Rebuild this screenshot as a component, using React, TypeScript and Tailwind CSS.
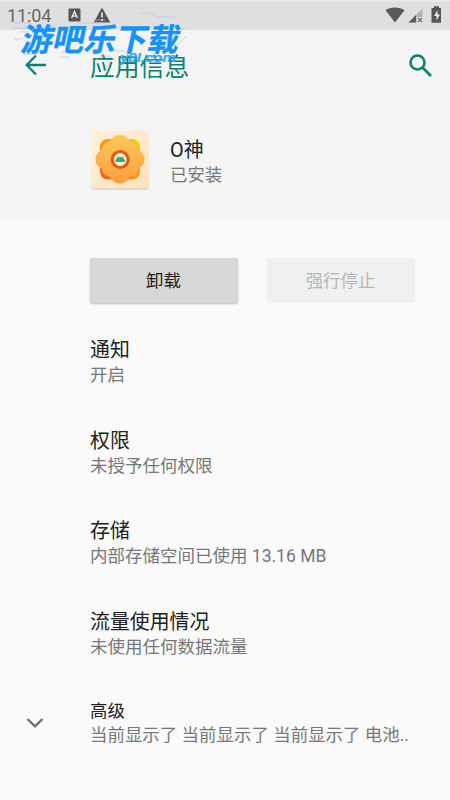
const rows = [
  { title: '通知', sub: '开启' },
  { title: '权限', sub: '未授予任何权限' },
  { title: '存储', sub: '内部存储空间已使用 13.16 MB' },
  { title: '流量使用情况', sub: '未使用任何数据流量' },
];

function StatusBar() {
  return (
    <div className="flex h-[30px] items-start justify-between border-t-2 border-[#e9e9e9] bg-[#dfdfdf] text-[#5a5a5a]">
      <div className="flex items-start pl-[7px] pt-[3px]">
        <span className="w-[61px] text-[18px] leading-[22px] tracking-[-0.1px] text-[#666]">11:04</span>
        <svg className="mt-[3px]" width="13" height="14" viewBox="0 0 13 14">
          <rect x="0.5" y="0.5" width="12" height="13" rx="1.2" fill="#555" />
          <path d="M3.6 10 6.5 3.5 9.4 10M4.6 8h3.8" fill="none" stroke="#e8e8e8" strokeWidth="1.4" />
        </svg>
        <svg className="ml-[12px] mt-[2px]" width="18" height="16" viewBox="0 0 18 16">
          <path d="M9 0.5 17.3 15.5H.7Z" fill="#555" />
          <path d="M9 5.5v5M9 12v2" stroke="#e0e0e0" strokeWidth="1.8" />
        </svg>
      </div>
      <div className="flex pr-[7px] pt-[4px]">
        <svg width="62" height="18" viewBox="0 0 62 18">
          <path d="M4.500 4.200C9 .600 18.500.600 23.500 4.200L14 16.500Z" fill="#5a5a5a" />
          <path d="M41.500 2.500v14H27.500Z" fill="#b1b1b1" />
          <path d="M35 9v7.500h-7.500Z" fill="#5a5a5a" />
          <path d="M35.500 11h7v6h-7Z" fill="#dfdfdf" />
          <path d="m37 12 4 4M41 12l-4 4" stroke="#707070" strokeWidth="1.300" />
          <path d="M53 .3h5V2h2v14.700h-9.500V2H53Z" fill="#555" />
          <path d="m56.500 4-3.500 6h2.500v4.500l3.500-6h-2.500Z" fill="#eee" />
        </svg>
      </div>
    </div>
  );
}

function Watermark() {
  return (
    <div className="pointer-events-none absolute left-0 top-0 h-[70px] w-[200px]">
      <svg className="absolute inset-0" width="200" height="70" viewBox="0 0 200 70" fill="none" stroke="#bdbaf0" strokeWidth=".7">
        <path d="M14 23h16M12 28h15M20 32h9M14 39h9M25 43h7M77 23h28M93 20h12M141 13h10l6 4h18M184 27l-9 10M186 36l-9 10M166 40h11M48 52h-9l-8 6M62 52h8M93 62l8-6h9M110 56l6 6M24 54h12M60 57h10M112 51h22" />
      </svg>
      <div className="absolute left-[23px] top-[14px] origin-center -skew-x-[12deg] whitespace-nowrap font-['Noto_Sans_CJK_SC',sans-serif] text-[31.500px] font-bold leading-[46px] text-[#1593fd] [-webkit-text-stroke:0.4px_#1593fd]">
        游吧乐下载
      </div>
      <div className="absolute left-[120px] top-[51px] origin-left scale-x-[1.2] whitespace-nowrap font-['Liberation_Sans',sans-serif] text-[12.500px] font-bold italic leading-[14px] text-[#35a8f8] [-webkit-text-stroke:0.2px_#35a8f8]">
        y8l.com
      </div>
    </div>
  );
}

function AppIcon() {
  return (
    <svg width="60" height="60" viewBox="0 0 60 60" className="shrink-0">
      <defs>
        <linearGradient id="petal" x1="0" y1="0" x2="0" y2="1">
          <stop stopColor="#fbc95a" />
          <stop offset="1" stopColor="#ff9c3f" />
        </linearGradient>
        <linearGradient id="back" x1="0" y1="1" x2="1" y2="0">
          <stop stopColor="#f25a18" />
          <stop offset=".5" stopColor="#f99916" />
          <stop offset="1" stopColor="#f8d600" />
        </linearGradient>
        <linearGradient id="tile" x1="0" y1="0" x2="1" y2="1">
          <stop stopColor="#fff0dc" />
          <stop offset="1" stopColor="#fee3b9" />
        </linearGradient>
      </defs>
      <rect x="1" y="1.500" width="58" height="58" rx="3.500" fill="#c9c6c2" />
      <rect x="1" y=".5" width="58" height="58" rx="3.500" fill="url(#tile)" />
      <rect x="10" y="9" width="40" height="40.500" rx="8" fill="url(#back)" />
      <path d="M23 7.500Q30 2 37 7.500C39 10 40 11.500 43 12.500Q47 14 48 18C49 21 50 21 52 23Q57.500 29 52 36C49 38 48 38 47 42Q46 45 42 46C39 47 39 49 37 51Q30 56.500 23 51C21 49 21 47 18 46Q14 45 13 42C12 38 11 38 8 36Q2.500 29 8 23C10 21 11 21 12 18Q13 14 17 12.500C20 11.500 21 10 23 7.500Z" fill="url(#petal)" />
      <circle cx="30.200" cy="29.500" r="9.500" fill="#dc5c12" />
      <circle cx="30.200" cy="29.500" r="6.400" fill="#fff1db" />
      <path d="M25.200 32a5 5 0 0 1 10 0Z" fill="#27b568" />
      <path d="m27 26 1.300 2M33.700 26l-1.300 2" stroke="#27b568" strokeWidth=".8" />
    </svg>
  );
}

export default function App() {
  return (
    <div className="relative h-[800px] w-[450px] overflow-hidden bg-[#fafafa] font-['Roboto','Noto_Sans_CJK_SC',sans-serif] text-[#212121]">
      <div className="h-[220px] bg-[#f4f4f4]">
        <StatusBar />
        <header className="flex h-[70px] items-center pl-[25px] pr-[17px] text-[#0b8270]">
          <svg width="22" height="22" viewBox="0 0 22 22" fill="none" stroke="currentColor" strokeWidth="2.300">
            <path d="M21 11H2M11 1.500 1.700 11l9.300 9.500" />
          </svg>
          <h1 className="ml-[43px] flex-1 pt-[5px] text-[24.800px] leading-[30px]">应用信息</h1>
          <svg width="25" height="25" viewBox="0 0 25 25" fill="none" stroke="currentColor" strokeWidth="2.600">
            <circle cx="9.500" cy="9.500" r="7" />
            <path d="m14.500 14.500 8.500 8.500" />
          </svg>
        </header>
        <div className="flex items-center pl-[90px] pt-[30px]">
          <AppIcon />
          <div className="ml-[20px] pt-[3px]">
            <div className="pt-px text-[19.900px] leading-[26px]">O神</div>
            <div className="text-[17.400px] leading-[23px] text-[#777]">已安装</div>
          </div>
        </div>
      </div>
      <div className="flex gap-[29px] pl-[89.500px] pt-[37.500px] text-[17.400px]">
        <button className="h-[45px] w-[148px] rounded-[2px] bg-[#d6d7d7] pt-[2px] shadow-[0_1px_2px_rgba(0,0,0,0.25)]">卸载</button>
        <button className="h-[45px] w-[148px] rounded-[2px] bg-[#eff0f0] pt-[2px] text-[#b5b6b6]">强行停止</button>
      </div>
      <main className="pl-[90px] pt-[35.500px]">
        {rows.map((row) => (
          <section key={row.title} className="h-[90.600px]">
            <div className="text-[19.900px] leading-[26px]">{row.title}</div>
            <div className="text-[17.500px] leading-[23px] text-[#777]">{row.sub}</div>
          </section>
        ))}
      </main>
      <div className="-mt-px flex items-center">
        <svg className="ml-[26px] mr-[46px]" width="18" height="12" viewBox="0 0 18 12" fill="none" stroke="#707070" strokeWidth="2.400">
          <path d="m1.500 2 7.500 7.300L16.500 2" />
        </svg>
        <div>
          <div className="text-[17.400px] leading-[24px]">高级</div>
          <div className="whitespace-nowrap text-[17.470px] leading-[24px] text-[#777]">当前显示了 当前显示了 当前显示了 电池..</div>
        </div>
      </div>
      <Watermark />
    </div>
  );
}
